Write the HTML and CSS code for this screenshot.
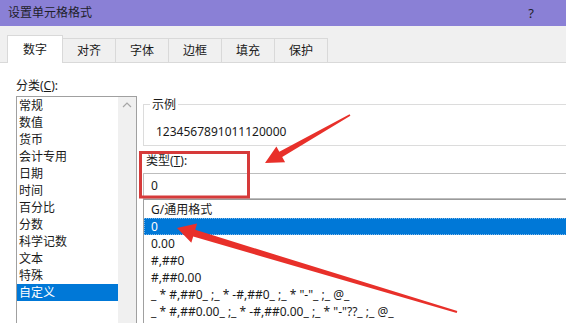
FILE: index.html
```html
<!DOCTYPE html>
<html lang="zh-CN">
<head>
<meta charset="utf-8">
<title>设置单元格格式</title>
<link rel="stylesheet" href="styles.css">
</head>
<body>
<div class="window">
  <div class="titlebar">
    <span class="title">设置单元格格式</span>
    <span class="help">?</span>
  </div>
  <div class="tabs">
    <div class="tab active">数字</div>
    <div class="tab">对齐</div>
    <div class="tab">字体</div>
    <div class="tab">边框</div>
    <div class="tab">填充</div>
    <div class="tab">保护</div>
  </div>
  <div class="panel">
    <div class="left">
      <div class="label cat-label">分类(<u>C</u>):</div>
      <div class="catlist">
        <ul class="items">
          <li>常规</li>
          <li>数值</li>
          <li>货币</li>
          <li>会计专用</li>
          <li>日期</li>
          <li>时间</li>
          <li>百分比</li>
          <li>分数</li>
          <li>科学记数</li>
          <li>文本</li>
          <li>特殊</li>
          <li class="sel">自定义</li>
        </ul>
        <div class="scroll">
          <svg class="chev" width="18" height="17" viewBox="0 0 18 17"><polyline points="5,10 9,6 13,10" fill="none" stroke="#a6a6a6" stroke-width="1.2"/></svg>
        </div>
      </div>
    </div>
    <div class="right">
      <fieldset class="sample">
        <legend>示例</legend>
        <div class="sample-val">1234567891011120000</div>
      </fieldset>
      <div class="label type-label">类型(<u>T</u>):</div>
      <div class="typebox">0</div>
      <ul class="fmtlist">
        <li>G/通用格式</li>
        <li class="sel">0</li>
        <li>0.00</li>
        <li>#,##0</li>
        <li>#,##0.00</li>
        <li>_ * #,##0_ ;_ * -#,##0_ ;_ * "-"_ ;_ @_</li>
        <li>_ * #,##0.00_ ;_ * -#,##0.00_ ;_ * "-"??_ ;_ @_</li>
      </ul>
    </div>
  </div>
  <svg class="annot" width="566" height="323" viewBox="0 0 566 323">
    <rect x="140.5" y="152.5" width="108" height="44.5" fill="none" stroke="#d63a3a" stroke-width="3"/>
    <polygon fill="#e8302a" points="265,163 285.1,162.2 282.2,156.9 350.4,115.7 349.6,114.3 279.3,151.7 276.4,146.4"/>
    <polygon fill="#e8302a" points="177,228 197.1,223.6 195.2,229.85 457.3,311 456.7,313 193.2,236.55 191.3,242.8"/>
  </svg>
</div>
</body>
</html>
```
FILE: styles.css
```css
html, body {
  margin: 0;
  padding: 0;
}
body {
  width: 566px;
  height: 323px;
  overflow: hidden;
  font-family: "Noto Sans", "Noto Sans CJK SC", sans-serif;
  font-size: 12px;
  color: #1a1a1a;
  background: #ffffff;
}
.window {
  position: relative;
  width: 566px;
  height: 323px;
  overflow: hidden;
}
.titlebar {
  height: 26px;
  background: #8a80d6;
  display: flex;
  align-items: center;
  justify-content: space-between;
  padding: 0 32px 0 8px;
  box-sizing: border-box;
}
.title {
  font-size: 12px;
  color: #1e1e2a;
  line-height: 26px;
}
.help {
  font-size: 13px;
  color: #1e1e2a;
  line-height: 26px;
}
.tabs {
  height: 37px;
  box-sizing: border-box;
  background: #f0f0f0;
  border-bottom: 1px solid #d9d9d9;
  display: flex;
  align-items: flex-end;
  padding-left: 7px;
}
.tab {
  height: 24px;
  box-sizing: border-box;
  padding: 0 14px;
  border: 1px solid #d9d9d9;
  border-bottom: none;
  margin-left: -1px;
  line-height: 23px;
  background: #f0f0f0;
  color: #1a1a1a;
}
.tab.active {
  margin-left: 0;
  height: 28px;
  margin-bottom: -1px;
  padding: 0 15px;
  background: #ffffff;
  line-height: 28px;
  position: relative;
  z-index: 1;
}
.panel {
  display: flex;
  padding-left: 16px;
  background: #ffffff;
  height: 260px;
}
.left {
  width: 121px;
  flex: none;
}
.label {
  line-height: 17px;
  height: 17px;
}
.cat-label {
  margin-top: 14px;
}
.catlist {
  margin-top: 2px;
  height: 240px;
  border: 1px solid #a0a0a0;
  display: flex;
}
.items {
  list-style: none;
  margin: 0;
  padding: 0;
  flex: 1;
}
.items li {
  height: 17px;
  line-height: 17px;
  padding-left: 2px;
}
.sel {
  background: #0078d7;
  color: #ffffff;
}
.scroll {
  width: 18px;
  flex: none;
  background: #f0f0f0;
}
.chev {
  display: block;
}
.right {
  margin-left: 6px;
  width: 440px;
  flex: none;
  padding-top: 33px;
}
.sample {
  margin: 0;
  padding: 0 0 5px 12px;
  border: 1px solid #dcdcdc;
  min-width: 0;
}
.sample legend {
  margin-left: -6px;
  padding: 0 2px;
  line-height: 17px;
}
.sample-val {
  margin-top: 10px;
  line-height: 17px;
}
.type-label {
  margin-top: 6px;
  padding-left: 3px;
}
.typebox {
  margin-top: 4px;
  height: 26px;
  box-sizing: border-box;
  border: 1px solid #bdbdbd;
  padding-left: 7px;
  line-height: 24px;
}
.fmtlist {
  list-style: none;
  margin: 0;
  padding: 1px 0 0 0;
  border-top: 1px solid #9a9a9a;
  border-left: 1px solid #a0a0a0;
  height: 140px;
}
.fmtlist li {
  height: 17px;
  line-height: 17px;
  padding-left: 7px;
  white-space: pre;
}
.fmtlist li.sel {
  outline: 1px dotted #7fb8ea;
  outline-offset: -1px;
}
.annot {
  position: absolute;
  left: 0;
  top: 0;
  pointer-events: none;
}
```
